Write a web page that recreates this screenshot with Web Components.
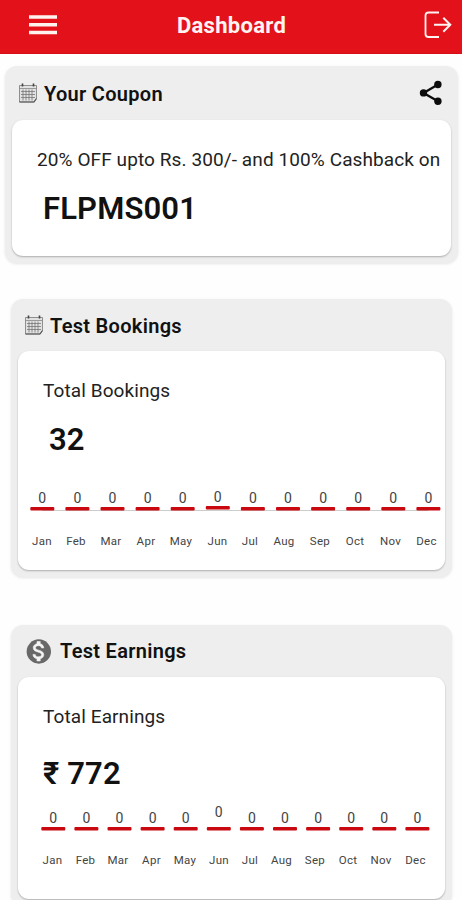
<!DOCTYPE html>
<html lang="en">
<head>
<meta charset="utf-8">
<title>Dashboard</title>
<style>
  body {
    margin: 0;
    height: 900px;
    overflow: hidden;
    background: #fefefe;
    color: #111;
    font-family: Roboto, "Noto Sans", sans-serif;
  }
</style>
</head>
<body>
<lab-dashboard></lab-dashboard>

<script>
const makeTemplate = (html) => {
  const template = document.createElement("template");
  template.innerHTML = html;
  return template;
};

class LabElement extends HTMLElement {
  constructor() {
    super();
    this.attachShadow({ mode: "open" });
    this.shadowRoot.appendChild(this.constructor.template.content.cloneNode(true));
  }
}

class LabIcon extends LabElement {
  static template = makeTemplate(`
    <style>
      :host { display: block; flex: none; }
      svg { display: block; }
    </style>
  `);

  static icons = {
    menu: `<svg width="28" height="20" viewBox="0 0 28 20" fill="#fff3f0">
      <path d="M0 .2h28v3.500H0zM0 8h28v3.500H0zM0 15.800h28v3.500H0z"/></svg>`,
    logout: `<svg width="28" height="28" viewBox="0 0 28 28" fill="none" stroke="#fff3f2" stroke-width="2">
      <path d="M15 1.500H4.500Q1.500 1.500 1.500 4.500V23Q1.500 26 4.500 26H15" stroke-width="1.800"/>
      <path d="M10 13.700H26M19.300 6.700l7 7-7 7"/></svg>`,
    share: `<svg width="24" height="26" viewBox="0 0 24 26" fill="#0c0c0c">
      <path d="M4.500 12.900L19 4.500M4.500 12.900L19 21.300" stroke="#0c0c0c" stroke-width="2.300"/>
      <circle cx="4.500" cy="12.900" r="3.700"/><circle cx="18.900" cy="4.500" r="3.700"/><circle cx="18.900" cy="21.300" r="3.700"/></svg>`,
    calendar: `<svg width="19" height="20" viewBox="0 0 19 20" fill="none" stroke="#777" stroke-width=".8">
      <path d="M1.500 2.500H18.500V15.500L16 19H1.500z" fill="#e2e2e2"/>
      <path d="M1.500 5.500H18.500" stroke="#888"/>
      <path d="M3 8.500H17M3 11.500H17M3 14.500H17M5 6.500V17.500M8 6.500V17.500M11 6.500V17.500M14 6.500V17.500"/>
      <path d="M1.500 19H16L18.500 15.500" stroke="#555" stroke-width="1.200"/>
      <path d="M4.500 .5V3.500M15.500 .5V3.500" stroke="#444" stroke-width="1.600"/></svg>`,
    dollar: `<svg width="25" height="25" viewBox="0 0 24 24">
      <circle cx="12.300" cy="12" r="11.700" fill="#686868"/>
      <path fill="#f4f4f4" d="M13.700 18.900v2.200h-3.200V18.900c-2-.4-3.800-1.700-3.900-4.100h2.300c.1 1.300 1 2.200 3.200 2.200 2.300 0 2.800-1.200 2.800-1.900 0-1-.5-1.900-3.100-2.500-2.900-.7-4.900-1.900-4.900-4.300 0-2 1.600-3.300 3.600-3.800V2.400h3.200v2.200c2.200.5 3.300 2.200 3.400 4h-2.300c-.1-1.300-.8-2.200-2.700-2.200-1.900 0-3 .8-3 2 0 1 .8 1.700 3.100 2.300s4.900 1.600 4.900 4.500c0 2.100-1.600 3.300-3.400 3.700z"
        stroke="#f4f4f4" stroke-width=".5"/></svg>`,
  };

  connectedCallback() {
    const icon = makeTemplate(LabIcon.icons[this.getAttribute("name")] || "");
    this.shadowRoot.appendChild(icon.content);
  }
}

class LabAppBar extends LabElement {
  static template = makeTemplate(`
    <style>
      :host {
        display: grid;
        grid-template-columns: 1fr auto 1fr;
        align-items: center;
        box-sizing: border-box;
        height: 54px;
        padding: 0 10px 4px 11px;
        background: #e31119;
        border-bottom: 1px solid #d60e15;
        color: #fff4f2;
      }
      h1 {
        margin: 3px 0 0;
        font-size: 22px;
        line-height: 26px;
        font-weight: 700;
        letter-spacing: .3px;
      }
      ::slotted([slot="start"]) { padding-left: 18px; }
      ::slotted([slot="end"]) { justify-self: end; }
    </style>
    <slot name="start"></slot>
    <h1><slot></slot></h1>
    <slot name="end"></slot>
  `);
}

class LabCard extends LabElement {
  static template = makeTemplate(`
    <style>
      :host {
        display: flex;
        flex-direction: column;
        box-sizing: border-box;
        padding: 0 7px 7px;
        border-radius: 12px;
        background: #eee;
        box-shadow: 0 1px 3px rgba(0, 0, 0, .1);
      }
      header {
        display: flex;
        align-items: center;
        flex: none;
        height: var(--head, 52px);
        padding: 0 8px 0 var(--head-pad, 6px);
        gap: var(--head-gap, 7px);
      }
      h2 {
        flex: 1;
        margin: var(--title-margin, 2px 0 0);
        font-size: 20px;
        line-height: 24px;
        font-weight: 600;
        letter-spacing: .3px;
      }
      section {
        flex: 1;
        border-radius: 11px;
        background: #fff;
        box-shadow: 0 1px 2px rgba(0, 0, 0, .28);
      }
    </style>
    <header>
      <slot name="icon"></slot>
      <h2><slot name="title"></slot></h2>
      <slot name="action"></slot>
    </header>
    <section><slot></slot></section>
  `);
}

class LabStat extends LabElement {
  static template = makeTemplate(`
    <style>
      :host { display: block; padding: 28px 0 0 25px; white-space: nowrap; }
      .label {
        color: #222;
        font-size: 19px;
        line-height: 24px;
        letter-spacing: .1px;
      }
      .value {
        margin: var(--value-margin, 18px 0 0 6px);
        font-size: 31px;
        line-height: 38px;
        font-weight: 600;
        letter-spacing: .15px;
      }
    </style>
    <div class="label"><slot name="label"></slot></div>
    <div class="value"><slot></slot></div>
  `);
}

const MONTHS = ["Jan", "Feb", "Mar", "Apr", "May", "Jun", "Jul", "Aug", "Sep", "Oct", "Nov", "Dec"];

class LabMonthChart extends LabElement {
  static template = makeTemplate(`
    <style>
      :host { display: block; }
      svg { display: block; overflow: visible; }
      text { text-anchor: middle; fill: #444; }
      .count { font-size: 14px; }
      .month { font-size: 11.5px; letter-spacing: .3px; }
      rect { fill: #c9090f; }
      line { stroke: #ccc; stroke-width: 1; }
    </style>
    <svg width="426" height="70"></svg>
  `);

  connectedCallback() {
    const start = Number(this.getAttribute("start"));
    const step = Number(this.getAttribute("step"));
    const raise = Number(this.getAttribute("raise") || 0);
    const labels = this.getAttribute("labels").split(" ").map(Number);
    const monthY = Number(this.getAttribute("month-y"));
    const axis = this.hasAttribute("axis")
      ? `<line x1="${start}" x2="${start + step * 11}" y1="21.500" y2="21.500"/>`
      : "";
    const bars = MONTHS.map((month, i) => {
      const x = start + step * i;
      const lift = i === 5 ? raise : 0;
      const barLift = i === 5 && axis ? 1 : 0;
      return `
        <text class="count" x="${x}" y="${13.500 - lift}">0</text>
        <rect x="${x - 12}" y="${18 - barLift}" width="24" height="3.400" rx="1"/>
        <text class="month" x="${labels[i]}" y="${monthY}">${month}</text>`;
    });
    this.shadowRoot.querySelector("svg").innerHTML = axis + bars.join("");
  }
}

class LabDashboard extends LabElement {
  static template = makeTemplate(`
    <style>
      :host { display: block; }
      main { display: flex; flex-direction: column; padding: 12px 10px 0 11px; }
      .coupon {
        height: 197px;
        margin: 0 -6px 36px;
        --head: 54px;
      }
      .bookings { height: 278px; margin-bottom: 48px; }
      .earnings {
        height: 281px;
        --head-pad: 8px;
        --head-gap: 9px;
        --title-margin: 0;
      }
      .bookings lab-month-chart { margin-top: 30px; }
      .earnings lab-month-chart { margin-top: 16px; }
      .earnings lab-stat { --value-margin: 26px 0 0 0; }
    </style>
    <lab-app-bar>
      <lab-icon name="menu" slot="start"></lab-icon>
      Dashboard
      <lab-icon name="logout" slot="end"></lab-icon>
    </lab-app-bar>
    <main>
      <lab-card class="coupon">
        <lab-icon name="calendar" slot="icon"></lab-icon>
        <span slot="title">Your Coupon</span>
        <lab-icon name="share" slot="action"></lab-icon>
        <lab-stat>
          <span slot="label">20% OFF upto Rs. 300/- and 100% Cashback on</span>
          FLPMS001
        </lab-stat>
      </lab-card>
      <lab-card class="bookings">
        <lab-icon name="calendar" slot="icon"></lab-icon>
        <span slot="title">Test Bookings</span>
        <lab-stat>
          <span slot="label">Total Bookings</span>
          32
        </lab-stat>
        <lab-month-chart axis start="24.300" step="35.100" raise="1" month-y="56"
          labels="24 58 93 128 163 199.500 232 266 302 337 372.500 408.500"></lab-month-chart>
      </lab-card>
      <lab-card class="earnings">
        <lab-icon name="dollar" slot="icon"></lab-icon>
        <span slot="title">Test Earnings</span>
        <lab-stat>
          <span slot="label">Total Earnings</span>
          ₹ 772
        </lab-stat>
        <lab-month-chart start="35.300" step="33.100" raise="6" month-y="55"
          labels="34.500 67.500 100 133.500 167 201 232 263.500 297 330 363 397.500"></lab-month-chart>
      </lab-card>
    </main>
  `);
}

window.customElements.define("lab-icon", LabIcon);
window.customElements.define("lab-app-bar", LabAppBar);
window.customElements.define("lab-card", LabCard);
window.customElements.define("lab-stat", LabStat);
window.customElements.define("lab-month-chart", LabMonthChart);
window.customElements.define("lab-dashboard", LabDashboard);
</script>
</body>
</html>
